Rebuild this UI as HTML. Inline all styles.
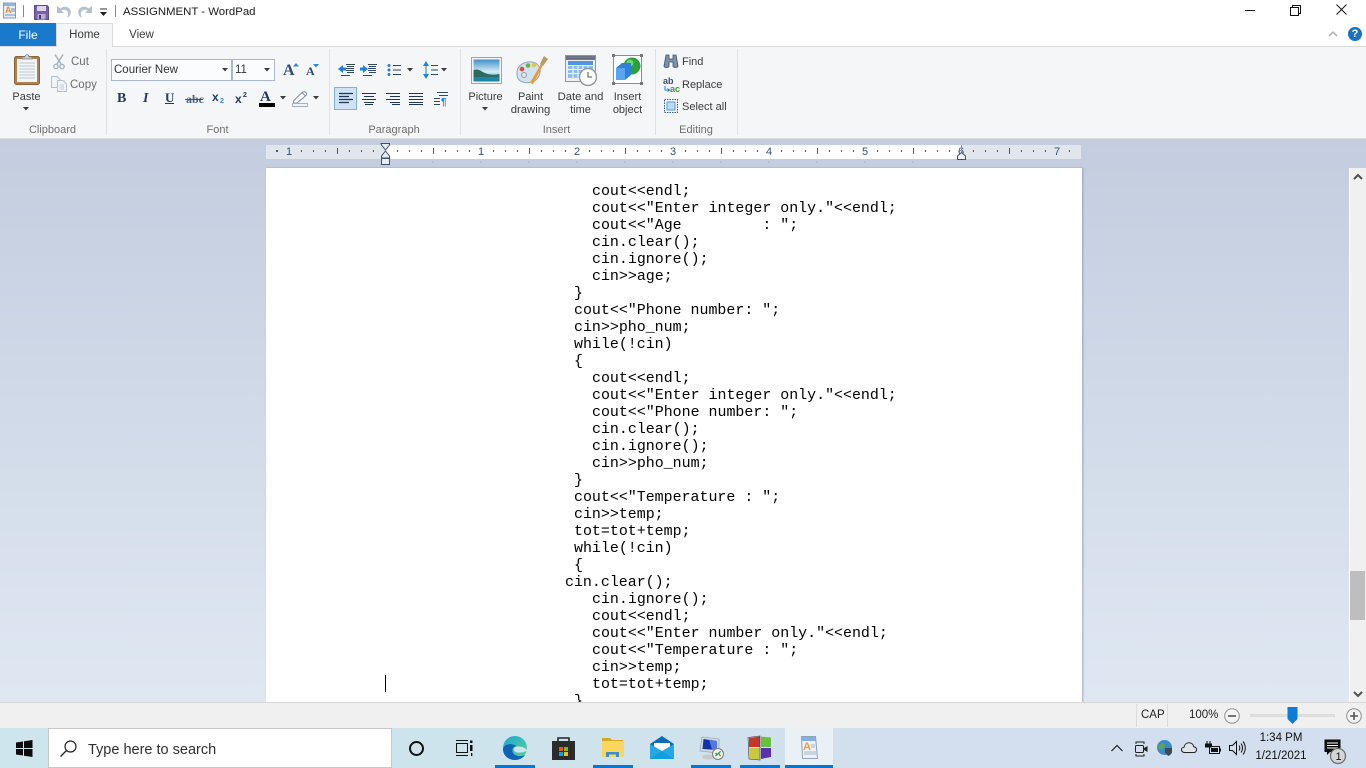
<!DOCTYPE html>
<html>
<head>
<meta charset="utf-8">
<style>
html,body{margin:0;padding:0;width:1366px;height:768px;overflow:hidden;background:#fff;font-family:"Liberation Sans",sans-serif;}
.a{position:absolute;white-space:nowrap;}
.t{position:absolute;white-space:nowrap;font-size:11.5px;color:#3b3b3b;line-height:14px;}
.c{text-align:center;}
.g{position:absolute;white-space:nowrap;font-size:11.5px;color:#6d6d6d;line-height:14px;text-align:center;}
.sep{position:absolute;top:49px;width:1px;height:86px;background:#dfe1e4;}
.code{position:absolute;white-space:pre;font-family:"Liberation Mono",monospace;font-size:14.95px;line-height:17px;color:#000;height:17px;}
svg{position:absolute;overflow:visible;}
.ul{position:absolute;top:765px;height:3px;background:#0078d7;}
</style>
</head>
<body>
<!-- title bar -->
<div class="a" style="left:0;top:0;width:1366px;height:24px;background:#fff"></div>
<svg style="left:2px;top:2px" width="16" height="17" viewBox="0 0 16 17"><rect x="1.5" y="1" width="12" height="15" fill="#e6eef7" stroke="#7f9bb9"/><rect x="2" y="1" width="11" height="3" fill="#8fb4dc"/><text x="3" y="11" font-size="9" font-weight="bold" fill="#f08a2c" font-family="Liberation Sans">A</text><path d="M9 7h4M9 9h4M3 13h10" stroke="#6a93c0"/></svg>
<div class="a" style="left:23px;top:5px;width:1px;height:12px;background:#8a8a8a"></div>
<svg style="left:34px;top:5px" width="15" height="15" viewBox="0 0 15 15"><path d="M0.500 0.500H13L14.500 2V14.500H0.500Z" fill="#7d5fa8" stroke="#5c4a8f"/><rect x="3" y="1" width="9" height="5" fill="#dcd6ea"/><rect x="3.500" y="9" width="8" height="5.500" fill="#b9aed2"/><rect x="5" y="10" width="2" height="4" fill="#4b3d78"/></svg>
<svg style="left:56px;top:4px" width="16" height="16" viewBox="0 0 16 16"><path d="M1 2V9H8L5.500 6.500C8 5 11 6 12 8.500C12.500 10 12 12 11 14C14 12.500 15.500 9.500 14.500 6.500C13 2.500 8 1.500 4.500 4.500Z" fill="#b4c0cc"/></svg>
<svg style="left:77px;top:4px" width="16" height="16" viewBox="0 0 16 16"><path d="M15 2V9H8L10.500 6.500C8 5 5 6 4 8.500C3.500 10 4 12 5 14C2 12.500 0.500 9.500 1.500 6.500C3 2.500 8 1.500 11.500 4.500Z" fill="#b4c0cc"/></svg>
<svg style="left:100px;top:9px" width="8" height="8" viewBox="0 0 8 8"><path d="M0 0H7" stroke="#333" stroke-width="1"/><path d="M0 3H7L3.500 7Z" fill="#222"/></svg>
<div class="a" style="left:115px;top:5px;width:1px;height:12px;background:#8a8a8a"></div>
<div class="a" style="left:123px;top:4px;font-size:11.4px;line-height:16px;color:#1a1a1a">ASSIGNMENT - WordPad</div>
<!-- window controls -->
<div class="a" style="left:1245px;top:10px;width:10px;height:1px;background:#111"></div>
<svg style="left:1290px;top:5px" width="11" height="11" viewBox="0 0 11 11"><path d="M0.500 2.500H8.500V10.500H0.500ZM2.500 2.500V0.500H10.500V8.500H8.500" fill="none" stroke="#111"/></svg>
<svg style="left:1336px;top:4px" width="11" height="11" viewBox="0 0 11 11"><path d="M0.500 0.500L10.500 10.500M10.500 0.500L0.500 10.500" stroke="#111" stroke-width="1"/></svg>
<!-- tabs -->
<div class="a" style="left:0;top:46px;width:1366px;height:1px;background:#dadbdc"></div>
<div class="a c" style="left:0;top:23px;width:56px;height:23px;background:#1979ca;color:#fff;font-size:12px;line-height:24px;text-align:center">File</div>
<div class="a c" style="left:56px;top:23px;width:57px;height:24px;background:#f5f6f7;border-top:1px solid #dadbdc;border-left:1px solid #dadbdc;border-right:1px solid #dadbdc;box-sizing:border-box;color:#3b3b3b;font-size:11.5px;line-height:23px;text-align:center">Home</div>
<div class="a c" style="left:114px;top:23px;width:55px;height:23px;color:#3b3b3b;font-size:11.5px;line-height:24px;text-align:center">View</div>
<svg style="left:1328px;top:30px" width="10" height="7" viewBox="0 0 10 7"><path d="M1 6L5 2L9 6" fill="none" stroke="#a8a8a8" stroke-width="1.300"/></svg>
<div class="a" style="left:1348px;top:27px;width:14px;height:14px;border-radius:7px;background:#1b71c4;color:#fff;font-size:11px;font-weight:bold;line-height:14px;text-align:center">?</div>
<!-- ribbon -->
<div class="a" style="left:0;top:47px;width:1366px;height:91px;background:#f5f6f7"></div>
<div class="a" style="left:0;top:138px;width:1366px;height:1px;background:#dcdee1"></div>
<div class="sep" style="left:106px"></div>
<div class="sep" style="left:329px"></div>
<div class="sep" style="left:460px"></div>
<div class="sep" style="left:655px"></div>
<div class="sep" style="left:737px"></div>
<!-- clipboard -->
<svg style="left:14px;top:53px" width="26" height="32" viewBox="0 0 26 32"><rect x="0.500" y="3.500" width="25" height="28" rx="2" fill="#b0814f" stroke="#8a6239"/><rect x="3" y="6" width="20" height="23" fill="#f4f5f6"/><path d="M5 10H21M5 13H21M5 16H21M5 19H21M5 22H21M5 25H21" stroke="#b9c6d6"/><path d="M8 6V4H11C11 1 15 1 15 4H18V6Z" fill="#cfd3d8" stroke="#7a7f86" stroke-width="0.700"/></svg>
<div class="t c" style="left:6px;top:90px;width:41px;text-align:center;font-size:11px">Paste</div>
<svg style="left:23px;top:107px" width="7" height="4" viewBox="0 0 7 4"><path d="M0 0H6L3 3.500Z" fill="#3c3c3c"/></svg>
<svg style="left:53px;top:54px" width="13" height="16" viewBox="0 0 13 16"><path d="M2 0.500L8 10M10 0.500L4 10" stroke="#a5b1bf" stroke-width="1.500"/><circle cx="3" cy="12.500" r="2.200" fill="none" stroke="#a5b1bf" stroke-width="1.300"/><circle cx="9" cy="12.500" r="2.200" fill="none" stroke="#a5b1bf" stroke-width="1.300"/></svg>
<div class="g" style="left:71px;top:55px">Cut</div>
<svg style="left:51px;top:76px" width="16" height="16" viewBox="0 0 16 16"><path d="M0.500 0.500H6L9 3.500V11.500H0.500Z" fill="#f2f5f8" stroke="#b4bfcc"/><path d="M6.500 4.500H12L15.500 8V15.500H6.500Z" fill="#f2f5f8" stroke="#b4bfcc"/><path d="M8.500 9H13M8.500 11H13M8.500 13H13" stroke="#c1ccd8"/></svg>
<div class="g" style="left:70px;top:78px">Copy</div>
<div class="t c" style="left:10px;top:123px;width:85px;text-align:center;color:#6f6f6f;font-size:11px">Clipboard</div>
<!-- font -->
<div class="a" style="left:111px;top:59px;width:121px;height:22px;background:#fbfcfd;border:1px solid #a9b7c9;box-sizing:border-box"></div>
<div class="a" style="left:114px;top:63px;font-size:11.500px;line-height:14px;color:#333">Courier New</div>
<svg style="left:222px;top:68px" width="7" height="4" viewBox="0 0 7 4"><path d="M0 0H6L3 3.500Z" fill="#3c3c3c"/></svg>
<div class="a" style="left:232px;top:59px;width:43px;height:22px;background:#fbfcfd;border:1px solid #a9b7c9;box-sizing:border-box"></div>
<div class="a" style="left:235px;top:63px;font-size:11.500px;line-height:14px;color:#333">11</div>
<svg style="left:264px;top:68px" width="7" height="4" viewBox="0 0 7 4"><path d="M0 0H6L3 3.500Z" fill="#3c3c3c"/></svg>
<div class="a" style="left:283px;top:62px;font-family:'Liberation Serif',serif;font-weight:bold;font-size:16px;line-height:17px;color:#2f4a6d">A</div>
<svg style="left:293px;top:63px" width="6" height="4" viewBox="0 0 6 4"><path d="M0 3.500H6L3 0Z" fill="#2b8adf"/></svg>
<div class="a" style="left:306px;top:65px;font-family:'Liberation Serif',serif;font-weight:bold;font-size:12px;line-height:13px;color:#2f4a6d">A</div>
<svg style="left:313px;top:64px" width="6" height="4" viewBox="0 0 6 4"><path d="M0 0H6L3 3.500Z" fill="#2b8adf"/></svg>
<div class="a" style="left:117px;top:91px;font-family:'Liberation Serif',serif;font-weight:bold;font-size:14px;line-height:15px;color:#1e3a5f">B</div>
<div class="a" style="left:143px;top:91px;font-family:'Liberation Serif',serif;font-style:italic;font-weight:bold;font-size:14px;line-height:15px;color:#1e3a5f">I</div>
<div class="a" style="left:165px;top:90px;font-family:'Liberation Serif',serif;font-weight:bold;font-size:13px;line-height:15px;color:#1e3a5f;border-bottom:1px solid #1e3a5f;height:13px">U</div>
<div class="a" style="left:186px;top:92px;font-family:'Liberation Serif',serif;font-weight:bold;font-size:12px;line-height:14px;color:#4a6383">abc</div>
<div class="a" style="left:185px;top:99px;width:18px;height:1px;background:#33527a"></div>
<div class="a" style="left:212px;top:91px;font-family:'Liberation Sans',sans-serif;font-weight:bold;font-size:12px;line-height:13px;color:#1e3a5f">x</div>
<div class="a" style="left:220px;top:98px;font-weight:bold;font-size:7px;line-height:8px;color:#2b8adf">2</div>
<div class="a" style="left:235px;top:93px;font-weight:bold;font-size:12px;line-height:13px;color:#1e3a5f">x</div>
<div class="a" style="left:243px;top:92px;font-weight:bold;font-size:7px;line-height:8px;color:#1e3a5f">2</div>
<div class="a" style="left:260px;top:90px;font-family:'Liberation Serif',serif;font-weight:bold;font-size:15px;line-height:14px;color:#1e3a5f">A</div>
<div class="a" style="left:259px;top:103px;width:16px;height:4px;background:#000"></div>
<svg style="left:280px;top:96px" width="7" height="4" viewBox="0 0 7 4"><path d="M0 0H6L3 3.500Z" fill="#3c3c3c"/></svg>
<svg style="left:292px;top:91px" width="16" height="16" viewBox="0 0 16 16"><path d="M1.500 10L10 1.500C11 0.500 13 0.500 14 1.500C15 2.500 14.500 4 14 4.500L5 12H1.500Z" fill="#fff" stroke="#7c8ea4"/><path d="M10 1.500L13.500 5" stroke="#7c8ea4"/><rect x="0.500" y="12.500" width="15" height="3" fill="#f2f3f5" stroke="#a8b0bb"/></svg>
<svg style="left:313px;top:96px" width="7" height="4" viewBox="0 0 7 4"><path d="M0 0H6L3 3.500Z" fill="#3c3c3c"/></svg>
<div class="t c" style="left:180px;top:123px;width:75px;text-align:center;color:#6f6f6f;font-size:11px">Font</div>
<!-- paragraph -->
<svg style="left:338px;top:62px" width="17" height="16" viewBox="0 0 17 16"><path d="M8 2.500H17M9 4.500H16M8 6.500H16M8 8.500H16M9 10.500H16" stroke="#33475f"/><path d="M3 13.500H12" stroke="#33475f"/><path d="M0 7L5 3V5.500H8V8.500H5V11Z" fill="#1f7fdf"/></svg>
<svg style="left:360px;top:62px" width="17" height="16" viewBox="0 0 17 16"><path d="M8 2.500H17M9 4.500H16M8 6.500H16M8 8.500H16M9 10.500H16" stroke="#33475f"/><path d="M3 13.500H12" stroke="#33475f"/><path d="M8 7L3 3V5.500H0V8.500H3V11Z" fill="#1f7fdf"/></svg>
<svg style="left:387px;top:63px" width="27" height="14" viewBox="0 0 27 14"><circle cx="2" cy="2.500" r="1.500" fill="#1f7fdf"/><circle cx="2" cy="7" r="1.500" fill="#1f7fdf"/><circle cx="2" cy="11.500" r="1.500" fill="#1f7fdf"/><path d="M6 2.500H14M6 7H14M6 11.500H14" stroke="#33475f"/><path d="M20 5H26L23 8.500Z" fill="#3c3c3c"/></svg>
<svg style="left:423px;top:61px" width="25" height="18" viewBox="0 0 25 18"><path d="M3 0L6 5H0ZM3 18L6 13H0Z" fill="#1f7fdf"/><path d="M2.500 5V13H3.500V5Z" fill="#1f7fdf"/><path d="M8 4.500H15M8 9H15M8 13.500H15" stroke="#33475f"/><path d="M18 7H24L21 10.500Z" fill="#3c3c3c"/></svg>
<div class="a" style="left:334px;top:87px;width:23px;height:23px;background:#cfe2f6;border:1px solid #7eb0e2;box-sizing:border-box"></div>
<svg style="left:339px;top:92px" width="14" height="13" viewBox="0 0 14 13"><path d="M0 1.500H14M0 4.500H10M0 7.500H14M0 10.500H10" stroke="#1f3552" stroke-width="1.200"/></svg>
<svg style="left:362px;top:92px" width="14" height="13" viewBox="0 0 14 13"><path d="M0 1.500H14M2 4.500H12M0 7.500H14M2 10.500H12M3 12.500H11" stroke="#1f3552"/></svg>
<svg style="left:386px;top:92px" width="14" height="13" viewBox="0 0 14 13"><path d="M0 1.500H14M4 4.500H14M0 7.500H14M4 10.500H14M6 12.500H14" stroke="#1f3552"/></svg>
<svg style="left:409px;top:92px" width="14" height="13" viewBox="0 0 14 13"><path d="M0 1.500H14M0 4.500H14M0 7.500H14M0 10.500H14M0 12.500H14" stroke="#1f3552"/></svg>
<svg style="left:434px;top:91px" width="15" height="15" viewBox="0 0 15 15"><path d="M3 1.500H14M5 4.500H14M0 7.500H6M0 10.500H6M0 13.500H6" stroke="#33475f"/><text x="7" y="14" font-size="10" font-weight="bold" fill="#1f7fdf" font-family="Liberation Sans">¶</text></svg>
<div class="t c" style="left:350px;top:123px;width:88px;text-align:center;color:#6f6f6f;font-size:11px">Paragraph</div>
<!-- insert -->
<svg style="left:471px;top:57px" width="31" height="27" viewBox="0 0 31 27"><defs><linearGradient id="sky" x1="0" y1="0" x2="0" y2="1"><stop offset="0" stop-color="#3f8fcb"/><stop offset="0.550" stop-color="#d3ecf4"/><stop offset="1" stop-color="#3ba5b6"/></linearGradient></defs><rect x="0.500" y="0.500" width="30" height="26" fill="#f4f4f4" stroke="#9ea4aa"/><rect x="2.500" y="2.500" width="26" height="22" fill="url(#sky)"/><path d="M2.500 13C8 11 11 15 14 16C18 18 23 18 28.500 17V20H2.500Z" fill="#2d6b5e"/><rect x="2.500" y="20" width="26" height="4.500" fill="#1c85a8"/></svg>
<svg style="left:515px;top:55px" width="33" height="31" viewBox="0 0 33 31"><path d="M2 19C1 11 9 6 17 7C24 8 27 14 24 21C21 27 14 29 8 27C4 26 2 23 2 19Z" fill="#d1e2f0" stroke="#8fa5bb"/><circle cx="9" cy="20" r="2.500" fill="#e5e5e5" stroke="#90a0b0"/><circle cx="7" cy="14" r="2.300" fill="#e04a3c"/><circle cx="13" cy="10.500" r="2.300" fill="#67b446"/><circle cx="19" cy="10" r="2.300" fill="#f2c230"/><path d="M15 28L26 9L28 10L18 29Z" fill="#ef9a26"/><path d="M25 9L29 1L33 4L28 11Z" fill="#b99a63"/></svg>
<svg style="left:565px;top:55px" width="33" height="32" viewBox="0 0 33 32"><rect x="0.500" y="0.500" width="30" height="26" fill="#eef0f2" stroke="#8f959b"/><rect x="1" y="1" width="29" height="4" fill="#6b7480"/><rect x="3" y="6" width="25" height="4" fill="#4f95e0"/><rect x="3" y="11" width="25" height="12" fill="#8cbcf0"/><path d="M3 14.500H28M3 18.500H28M8 10V23M13 10V23M18 10V23M23 10V23" stroke="#fff"/><circle cx="23" cy="22" r="8.500" fill="#fafafa" stroke="#8d9399" stroke-width="1.300"/><path d="M23 17V22H27" fill="none" stroke="#555"/></svg>
<svg style="left:612px;top:54px" width="31" height="32" viewBox="0 0 31 32"><rect x="1.500" y="1.500" width="28" height="28" fill="#fff" stroke="#8b8b8b"/><rect x="0" y="0" width="3" height="3" fill="#777"/><rect x="28" y="0" width="3" height="3" fill="#777"/><rect x="0" y="28" width="3" height="3" fill="#777"/><rect x="28" y="28" width="3" height="3" fill="#777"/><circle cx="20" cy="12" r="8.500" fill="#2aa13b"/><circle cx="18" cy="9" r="3.500" fill="#6ed576"/><path d="M4 14L10 9H19V21L13 26H4Z" fill="#2f7fdb"/><path d="M4 14H13V26H4Z" fill="#5aa5f0"/></svg>
<div class="t c" style="left:460px;top:90px;width:51px;text-align:center;font-size:11px">Picture</div>
<svg style="left:482px;top:107px" width="7" height="4" viewBox="0 0 7 4"><path d="M0 0H6L3 3.500Z" fill="#3c3c3c"/></svg>
<div class="t c" style="left:505px;top:90px;width:51px;text-align:center;font-size:11px">Paint</div>
<div class="t c" style="left:505px;top:103px;width:51px;text-align:center;font-size:11.3px">drawing</div>
<div class="t c" style="left:553px;top:90px;width:55px;text-align:center;font-size:11.3px">Date and</div>
<div class="t c" style="left:553px;top:103px;width:55px;text-align:center;font-size:11px">time</div>
<div class="t c" style="left:603px;top:90px;width:49px;text-align:center;font-size:11px">Insert</div>
<div class="t c" style="left:603px;top:103px;width:49px;text-align:center;font-size:11px">object</div>
<div class="t c" style="left:520px;top:123px;width:73px;text-align:center;color:#6f6f6f;font-size:11px">Insert</div>
<!-- editing -->
<svg style="left:663px;top:54px" width="16" height="15" viewBox="0 0 16 15"><path d="M3 1H6V5H10V1H13L15 12C15 14 10 14 10 12V8H6V12C6 14 1 14 1 12Z" fill="#7d92aa" stroke="#3d5068" stroke-width="0.800"/></svg>
<div class="t" style="left:682px;top:55px;font-size:11px">Find</div>
<svg style="left:663px;top:77px" width="17" height="16" viewBox="0 0 17 16"><text x="0" y="7" font-size="9" font-weight="bold" fill="#3d5068" font-family="Liberation Sans">ab</text><text x="7" y="15" font-size="9" font-weight="bold" fill="#3a9a3a" font-family="Liberation Sans">ac</text><path d="M2 9V13H6M4.500 11.500L6.500 13L4.500 14.500" fill="none" stroke="#1f7fdf"/></svg>
<div class="t" style="left:682px;top:78px;font-size:11px">Replace</div>
<svg style="left:664px;top:99px" width="14" height="14" viewBox="0 0 14 14"><rect x="0.500" y="0.500" width="13" height="13" fill="none" stroke="#2f5f9a" stroke-dasharray="1.500 1"/><rect x="3" y="3" width="8" height="8" fill="#bcd9f5" stroke="#5a9ade"/></svg>
<div class="t" style="left:682px;top:100px;font-size:11px">Select all</div>
<div class="t c" style="left:660px;top:123px;width:72px;text-align:center;color:#6f6f6f;font-size:11px">Editing</div>
<!-- workspace -->
<div class="a" style="left:0;top:139px;width:1366px;height:563px;background:linear-gradient(#c3cddf,#dfe8f2)"></div>
<!-- ruler -->
<div class="a" style="left:266px;top:145px;width:815px;height:14px;background:#e1e5ec"></div>
<div class="a" style="left:385px;top:145px;width:576px;height:14px;background:#fff"></div>
<svg style="left:266px;top:145px" width="815" height="24" viewBox="0 0 815 24" font-family="Liberation Sans" font-size="11" fill="#31506f">
<defs><pattern id="rp" x="23" y="0" width="96" height="14" patternUnits="userSpaceOnUse"><rect x="12" y="5" width="1" height="2" fill="#4a5b6e"/><rect x="24" y="5" width="1" height="2" fill="#4a5b6e"/><rect x="36" y="5" width="1" height="2" fill="#4a5b6e"/><rect x="48" y="3" width="1" height="6" fill="#4a5b6e"/><rect x="60" y="5" width="1" height="2" fill="#4a5b6e"/><rect x="72" y="5" width="1" height="2" fill="#4a5b6e"/><rect x="84" y="5" width="1" height="2" fill="#4a5b6e"/></pattern></defs>
<rect x="0" y="0" width="806" height="14" fill="url(#rp)"/>
<rect x="10" y="5" width="1" height="2" fill="#4a5b6e"/>
<path d="M167 16v2M215 16v2M263 16v2M311 16v2M359 16v2M407 16v2M455 16v2M503 16v2M551 16v2M599 16v2M647 16v2" stroke="#a8b3c2" fill="none"/>
<text x="20" y="10">1</text><text x="212" y="10">1</text><text x="308" y="10">2</text><text x="404" y="10">3</text><text x="500" y="10">4</text><text x="596" y="10">5</text><text x="692" y="10">6</text><text x="788" y="10">7</text>
</svg>
<svg style="left:380px;top:143px" width="11" height="23" viewBox="0 0 11 23"><path d="M1 0.500H9.500V2L5.500 7L1.500 2ZM5.500 8L9.500 13V15H1.500V13Z" fill="#e8edf3" stroke="#3f5066"/><rect x="1.500" y="15.500" width="8" height="6" fill="#e8edf3" stroke="#3f5066"/></svg>
<svg style="left:956px;top:145px" width="11" height="15" viewBox="0 0 11 15"><path d="M5.500 0V7" stroke="#8a96a5"/><path d="M1.500 11L5.500 7.500L9.500 11V14.500H1.500Z" fill="#eef1f5" stroke="#3f5066"/></svg>
<!-- page -->
<div class="a" style="left:266px;top:168px;width:816px;height:534px;background:#fff;box-shadow:1px 0 2px rgba(110,125,150,.55)"></div>
<div class="a" style="left:385px;top:675px;width:1px;height:17px;background:#000"></div>
<div class="code" style="left:592px;top:184px">cout&lt;&lt;endl;</div>
<div class="code" style="left:592px;top:201px">cout&lt;&lt;"Enter integer only."&lt;&lt;endl;</div>
<div class="code" style="left:592px;top:218px">cout&lt;&lt;"Age         : ";</div>
<div class="code" style="left:592px;top:235px">cin.clear();</div>
<div class="code" style="left:592px;top:252px">cin.ignore();</div>
<div class="code" style="left:592px;top:269px">cin&gt;&gt;age;</div>
<div class="code" style="left:574px;top:286px">}</div>
<div class="code" style="left:574px;top:303px">cout&lt;&lt;"Phone number: ";</div>
<div class="code" style="left:574px;top:320px">cin&gt;&gt;pho_num;</div>
<div class="code" style="left:574px;top:337px">while(!cin)</div>
<div class="code" style="left:574px;top:354px">{</div>
<div class="code" style="left:592px;top:371px">cout&lt;&lt;endl;</div>
<div class="code" style="left:592px;top:388px">cout&lt;&lt;"Enter integer only."&lt;&lt;endl;</div>
<div class="code" style="left:592px;top:405px">cout&lt;&lt;"Phone number: ";</div>
<div class="code" style="left:592px;top:422px">cin.clear();</div>
<div class="code" style="left:592px;top:439px">cin.ignore();</div>
<div class="code" style="left:592px;top:456px">cin&gt;&gt;pho_num;</div>
<div class="code" style="left:574px;top:473px">}</div>
<div class="code" style="left:574px;top:490px">cout&lt;&lt;"Temperature : ";</div>
<div class="code" style="left:574px;top:507px">cin&gt;&gt;temp;</div>
<div class="code" style="left:574px;top:524px">tot=tot+temp;</div>
<div class="code" style="left:574px;top:541px">while(!cin)</div>
<div class="code" style="left:574px;top:558px">{</div>
<div class="code" style="left:565px;top:575px">cin.clear();</div>
<div class="code" style="left:592px;top:592px">cin.ignore();</div>
<div class="code" style="left:592px;top:609px">cout&lt;&lt;endl;</div>
<div class="code" style="left:592px;top:626px">cout&lt;&lt;"Enter number only."&lt;&lt;endl;</div>
<div class="code" style="left:592px;top:643px">cout&lt;&lt;"Temperature : ";</div>
<div class="code" style="left:592px;top:660px">cin&gt;&gt;temp;</div>
<div class="code" style="left:592px;top:677px">tot=tot+temp;</div>
<div class="a" style="left:574px;top:694px;width:10px;height:8px;overflow:hidden"><div class="code" style="left:0;top:0">}</div></div>
<!-- scrollbar -->
<div class="a" style="left:1349px;top:168px;width:17px;height:534px;background:#f0f0f0;border-left:1px solid #fff;box-sizing:border-box"></div>
<div class="a" style="left:1350px;top:571px;width:15px;height:49px;background:#bebebe"></div>
<svg style="left:1353px;top:173px" width="10" height="8" viewBox="0 0 10 8"><path d="M1 6L5 2L9 6" fill="none" stroke="#505050" stroke-width="2"/></svg>
<svg style="left:1353px;top:690px" width="10" height="8" viewBox="0 0 10 8"><path d="M1 2L5 6L9 2" fill="none" stroke="#505050" stroke-width="2"/></svg>
<!-- status bar -->
<div class="a" style="left:0;top:702px;width:1366px;height:26px;background:#f0f0f0;border-top:1px solid #d8d8d8;box-sizing:border-box"></div>
<div class="a" style="left:1136px;top:704px;width:1px;height:23px;background:#dcdcdc"></div>
<div class="a" style="left:1167px;top:704px;width:1px;height:23px;background:#dcdcdc"></div>
<div class="a" style="left:1141px;top:708px;font-size:11.5px;line-height:15px;color:#222">CAP</div>
<div class="a" style="left:1189px;top:708px;font-size:11.5px;line-height:15px;color:#222">100%</div>
<svg style="left:1224px;top:708px" width="16" height="16" viewBox="0 0 16 16"><circle cx="8" cy="8" r="7.300" fill="#f4f4f4" stroke="#8f8f8f"/><path d="M4 8H12" stroke="#555" stroke-width="1.600"/></svg>
<div class="a" style="left:1250px;top:714px;width:85px;height:3px;background:#dfe3e3;border:1px solid #d9dada;box-sizing:border-box"></div>
<svg style="left:1287px;top:707px" width="11" height="17" viewBox="0 0 11 17"><path d="M0.500 0H10.500V12L5.500 17L0.500 12Z" fill="#0f7bd6"/></svg>
<svg style="left:1346px;top:708px" width="16" height="16" viewBox="0 0 16 16"><circle cx="8" cy="8" r="7.300" fill="#f4f4f4" stroke="#8f8f8f"/><path d="M4 8H12M8 4V12" stroke="#555" stroke-width="1.600"/></svg>
<!-- taskbar -->
<div class="a" style="left:0;top:728px;width:1366px;height:40px;background:linear-gradient(90deg,#cde5ed 0%,#cfe3ec 45%,#d3dfee 65%,#d3dfee 100%)"></div>
<svg style="left:16px;top:740px" width="17" height="17" viewBox="0 0 17 17"><path d="M0 2.500L7 1.500V8H0ZM8 1.300L16.500 0V8H8ZM0 9H7V15.500L0 14.500ZM8 9H16.500V17L8 15.700Z" fill="#0c0c0c"/></svg>
<div class="a" style="left:48px;top:728px;width:344px;height:40px;background:#fff;border:1px solid #c8c8c8;box-sizing:border-box"></div>
<svg style="left:60px;top:740px" width="17" height="17" viewBox="0 0 17 17"><circle cx="10.500" cy="6.500" r="5.500" fill="none" stroke="#222" stroke-width="1.200"/><path d="M6.500 10.500L0.500 16.500" stroke="#222" stroke-width="1.300"/></svg>
<div class="a" style="left:88px;top:741px;font-size:14.5px;line-height:18px;color:#2f2f2f">Type here to search</div>
<svg style="left:408px;top:740px" width="17" height="17" viewBox="0 0 17 17"><circle cx="8.500" cy="8.500" r="6.500" fill="none" stroke="#111" stroke-width="2"/></svg>
<svg style="left:455px;top:740px" width="18" height="16" viewBox="0 0 18 16"><path d="M1 0.500H13M1 15.500H13" stroke="#111"/><rect x="1.500" y="3.500" width="11" height="9" fill="none" stroke="#111"/><rect x="15" y="0.500" width="2.500" height="2.500" fill="#111"/><rect x="15" y="5" width="2.500" height="6" fill="#111"/><rect x="16" y="13" width="1.300" height="3" fill="#111"/></svg>
<!-- edge -->
<svg style="left:503px;top:736px" width="24" height="24" viewBox="0 0 24 24"><defs><linearGradient id="e1" x1="0" y1="0" x2="1" y2="1"><stop offset="0" stop-color="#1ba5d8"/><stop offset="1" stop-color="#5ed68a"/></linearGradient></defs><circle cx="12" cy="12" r="12" fill="url(#e1)"/><path d="M0 13C0 20 6 24 12 24C16 24 20 22 22 19C19 20.500 13 21 10 17C8.500 14.500 9.500 11 13 10C9 7 1 7.500 0 13Z" fill="#0e62b8"/><path d="M11 12C12 10 20 9.500 24 14C23.500 16 17 17 14 16.500C11 16 10 14 11 12Z" fill="#cfe4ec"/></svg>
<!-- store -->
<svg style="left:552px;top:736px" width="23" height="24" viewBox="0 0 23 24"><path d="M6 6V2H17V6" fill="none" stroke="#222" stroke-width="1.600"/><path d="M0 5H23V24H0Z" fill="#2b2b2b"/><rect x="7" y="11" width="4" height="4" fill="#ef5026"/><rect x="12" y="11" width="4" height="4" fill="#7eba00"/><rect x="7" y="16" width="4" height="4" fill="#00a4ef"/><rect x="12" y="16" width="4" height="4" fill="#ffb900"/></svg>
<!-- explorer -->
<svg style="left:602px;top:738px" width="22" height="20" viewBox="0 0 22 20"><path d="M0 0H8L10 2H21V6H0Z" fill="#d9a620"/><path d="M0 3H22V19H0Z" fill="#fbd65f"/><path d="M4 19V14H17V19H14V16.500H7V19Z" fill="#3a8ed0"/></svg>
<!-- mail -->
<svg style="left:650px;top:736px" width="24" height="24" viewBox="0 0 24 24"><path d="M0 8L12 0L24 8V23H0Z" fill="#0f6cb4"/><path d="M4 7H20V12L12 15L4 12Z" fill="#fff"/><path d="M0 8L12 15L24 8V23H0Z" fill="#27a8e6"/><path d="M0 23L12 15L24 23Z" fill="#119ede"/></svg>
<!-- rdp -->
<svg style="left:699px;top:736px" width="25" height="25" viewBox="0 0 25 25"><path d="M3 1L20 3V17L1 15Z" fill="#d6dbe3" stroke="#8d9099" stroke-width="0.600"/><path d="M4.500 3L18 5V14L3.500 13Z" fill="#1233a8"/><path d="M10 3.500L18 5V14L13 13.500Z" fill="#4f79e0"/><ellipse cx="9" cy="21" rx="6" ry="2.500" fill="#c9c9c9"/><circle cx="19" cy="18" r="5.500" fill="#f0f0f0" stroke="#7d7d7d"/><path d="M16.500 20L21.500 15.500M16.500 17L18 18.500M20 18L21.500 20" stroke="#3a9a3a" stroke-width="1.300"/></svg>
<!-- tiles -->
<svg style="left:748px;top:736px" width="24" height="24" viewBox="0 0 24 24"><path d="M1 2L12 0.500V11H1Z" fill="#c8352c"/><path d="M13 0.500L23 1.500V11H13Z" fill="#67c03f"/><path d="M1 12H12V23.500L2 23Z" fill="#c9c93f"/><path d="M13 12H23V21L13 23Z" fill="#5a2fb0"/><path d="M0 1.500L12 0V24L1 23Z" fill="none" stroke="#3a3a3a" stroke-width="0.600"/></svg>
<!-- wordpad active -->
<div class="a" style="left:785px;top:728px;width:48px;height:40px;background:#e9f0f6"></div>
<svg style="left:800px;top:736px" width="19" height="23" viewBox="0 0 19 23"><path d="M1.500 0.500H15.500L17.500 22.500H2.500Z" fill="#eef2f7" stroke="#8fa3ba"/><rect x="2" y="1" width="13.500" height="4" fill="#7fb0e0"/><text x="3" y="14" font-size="11" font-weight="bold" fill="#f29a3a" font-family="Liberation Sans">A</text><path d="M11 9H15M11 11H15M4 16H16M4 18H16" stroke="#9fb4cc"/></svg>
<!-- underlines -->
<div class="ul" style="left:495px;width:40px"></div>
<div class="ul" style="left:593px;width:40px"></div>
<div class="ul" style="left:691px;width:40px"></div>
<div class="ul" style="left:740px;width:40px"></div>
<div class="ul" style="left:785px;width:48px"></div>
<!-- tray -->
<svg style="left:1111px;top:744px" width="12" height="8" viewBox="0 0 12 8"><path d="M0.500 7L6 1.500L11.500 7" fill="none" stroke="#111" stroke-width="1.100"/></svg>
<svg style="left:1135px;top:741px" width="13" height="16" viewBox="0 0 13 16"><path d="M1 3V1H9V3M1 13V15H9V13" fill="none" stroke="#222"/><rect x="0.500" y="4.500" width="8" height="7" rx="1" fill="none" stroke="#222"/><path d="M9 7L12.500 5V11L9 9Z" fill="#222"/></svg>
<svg style="left:1157px;top:740px" width="16" height="16" viewBox="0 0 16 16"><circle cx="7.500" cy="7.500" r="7.500" fill="#3a89c9"/><path d="M2 4C5 2 8 3 8 6C8 9 4 8 3 11C1 9 1 6 2 4Z" fill="#5aa060"/><path d="M8 8H15V12C15 14 11.500 16 11.500 16C11.500 16 8 14 8 12Z" fill="#3d4a55"/></svg>
<svg style="left:1181px;top:742px" width="16" height="11" viewBox="0 0 16 11"><path d="M3.500 10.500C1.500 10.500 0.500 9 0.500 7.800C0.500 6.300 1.700 5.300 3 5.300C3.500 2.500 5.500 0.800 8 0.800C10.500 0.800 12.300 2.500 12.700 4.800C14.500 5 15.500 6.300 15.500 7.800C15.500 9.300 14.300 10.500 12.800 10.500Z" fill="#dfe5ea" stroke="#222"/></svg>
<svg style="left:1205px;top:741px" width="16" height="14" viewBox="0 0 16 14"><path d="M2 0V3M5 0V3M0.500 3H6.500V6H0.500Z" stroke="#111" fill="#111"/><rect x="4.500" y="5.500" width="10" height="7" fill="none" stroke="#111"/><rect x="6" y="7" width="7" height="4" fill="#111"/><rect x="15" y="7.500" width="1" height="3" fill="#111"/></svg>
<svg style="left:1229px;top:740px" width="17" height="16" viewBox="0 0 17 16"><path d="M0.500 5.500H3.500L7.500 1.500V14.500L3.500 10.500H0.500Z" fill="none" stroke="#111"/><path d="M10 5.500C11 7 11 9 10 10.500M12 3.500C14 6 14 10 12 12.500M14 1.500C17 5 17 11 14 14.500" fill="none" stroke="#111"/></svg>
<div class="a" style="left:1257px;top:731px;width:48px;text-align:center;font-size:11.5px;line-height:15px;color:#111">1:34 PM</div>
<div class="a" style="left:1251px;top:749px;width:60px;text-align:center;font-size:11.5px;line-height:15px;color:#111">1/21/2021</div>
<svg style="left:1324px;top:739px" width="26" height="26" viewBox="0 0 26 26"><path d="M0.500 0.500H16.500V13H6L3 16V13H0.500Z" fill="#0c0c0c"/><path d="M3 4H14M3 6.500H14M3 9H14" stroke="#fff"/><circle cx="14" cy="17" r="7.500" fill="#d4d6d8" stroke="#6f6f6f" stroke-width="1.300"/><text x="11.500" y="21" font-size="11" fill="#111" font-family="Liberation Sans">1</text></svg>
</body>
</html>
